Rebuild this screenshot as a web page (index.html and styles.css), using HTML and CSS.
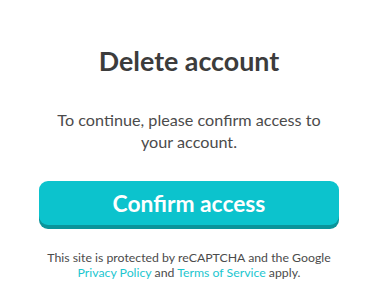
FILE: index.html
```html
<!DOCTYPE html>
<html>
<head>
<meta charset="utf-8">
<link rel="stylesheet" href="styles.css">
</head>
<body>
<main class="dialog">
  <h1 class="title">Delete account</h1>
  <p class="message">To continue, please confirm access to your account.</p>
  <button class="confirm">Confirm access</button>
  <p class="legal">This site is protected by reCAPTCHA and the Google <a href="#">Privacy Policy</a> and <a href="#">Terms of Service</a> apply.</p>
</main>
</body>
</html>
```
FILE: styles.css
```css
html, body {
  margin: 0;
  padding: 0;
  background: #ffffff;
}
body {
  font-family: Lato, "Noto Sans", sans-serif;
  color: #3c3c3c;
}
.dialog {
  width: 378px;
  display: flex;
  flex-direction: column;
  align-items: center;
  padding-top: 46px;
  box-sizing: border-box;
}
.title {
  margin: 0;
  font-size: 26.8px;
  line-height: 30px;
  font-weight: 700;
  color: #3c3c3c;
}
.message {
  margin: 33px 0 0;
  width: 290px;
  text-align: center;
  font-size: 16.2px;
  line-height: 22px;
  color: #4b4b4b;
}
.confirm {
  margin-top: 28px;
  width: 300px;
  height: 44px;
  border: 0;
  border-radius: 9px;
  background: #0cc3cd;
  box-shadow: 0 4px 0 #0a949a;
  color: #ffffff;
  font-family: inherit;
  font-size: 22.8px;
  font-weight: 700;
  padding: 0;
  cursor: pointer;
}
.legal {
  margin: 25px 0 0;
  width: 300px;
  text-align: center;
  font-size: 12.3px;
  line-height: 15px;
  color: #4b4b4b;
}
.legal a {
  color: #1cc6cf;
  text-decoration: none;
}
```
